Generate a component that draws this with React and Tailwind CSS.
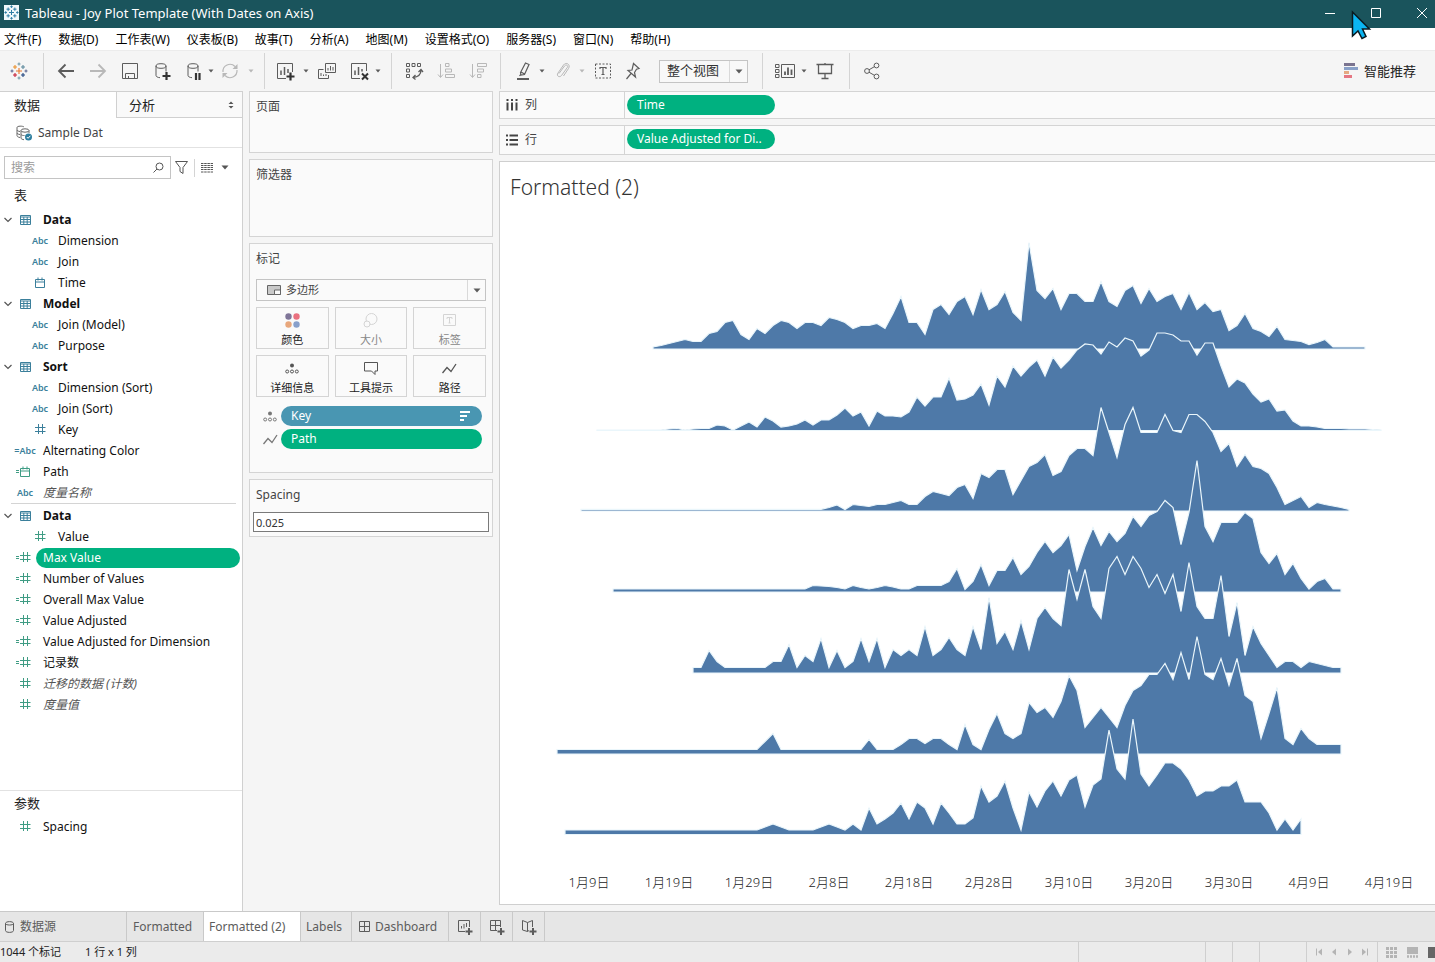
import React, { useState } from "react"

const FONT = "font-['Noto_Sans','Noto_Sans_CJK_SC',sans-serif]"

// Day heights per ridge, one value for every 8 units on the time axis
const ridges = [
    {
        start: 653, base: 349,
        values: [1.5, 3, 5, 7, 9, 7, 7, 15, 17, 26, 28, 14, 9, 20, 15, 23, 28, 26, 20, 26, 26, 23, 31, 29, 26, 20, 23, 23, 25, 20, 35, 52, 26, 26, 14, 39, 44, 34, 47, 52, 34, 59, 39, 44, 57, 36, 28, 106, 58, 50, 60, 39, 55, 55, 47, 47, 67, 47, 42, 58, 63, 45, 60, 47, 52, 55, 39, 56, 39, 46, 37, 39, 18, 23, 35, 20, 17, 12, 22, 9, 8, 7, 4, 6, 9, 1.5, 1.5, 1.5, 1.5, 1.5],
    },
    {
        start: 597, base: 430.5,
        values: [0, 0, 0, 0, 0, 0, 0, 0, 0, 1, 1.5, 0, 1, 1.5, 1.5, 5, 4, 0, 4, 8, 3, 13, 9, 3, 4, 6, 10, 5, 10, 10, 15, 22, 14, 18, 4, 19, 14, 14, 13, 18, 33, 24, 33, 33, 52, 30, 31, 35, 46, 25, 54, 43, 64, 54, 63, 70, 54, 73, 62, 70, 80, 86, 85, 76, 88, 83, 92, 89, 74, 80, 97, 97, 95, 89, 89, 75, 87, 87, 64, 43, 51, 47, 36, 28, 31, 19, 20, 9, 4, 4, 3, 1.5, 1.5, 1.5, 1, 1, 1, 0.5, 0],
    },
    {
        start: 581, base: 511,
        values: [...Array(31).fill(1.2), 3, 5.5, 1, 6, 5, 4, 6, 6, 8, 10, 6, 6, 14, 19, 17, 15, 23, 26, 12, 37, 33, 41, 41, 16, 30, 44, 48, 56, 35, 39, 55, 62, 62, 55, 103, 78, 53, 86, 103, 78, 78, 78, 96, 80, 78, 96, 96, 89, 78, 59, 67, 44, 56, 44, 42, 37, 23, 6, 10, 14, 3, 8, 6, 4.5, 3, 1],
    },
    {
        start: 613, base: 592,
        values: [...Array(25).fill(2.5), 6, 5.5, 5, 4, 2.5, 6, 4, 2.5, 4, 6, 4.5, 2.5, 2.5, 6, 6, 6, 6, 10, 23, 2, 10, 27, 6, 21, 21, 34, 17, 25, 39, 50, 39, 46, 57, 21, 45, 64, 46, 60, 50, 58, 75, 65, 76, 80, 91, 84, 47, 79, 131, 65, 50, 69, 69, 69, 79, 73, 39, 28, 38, 17, 28, 13, 2.5, 10, 13, 2.5, 2.5],
    },
    {
        start: 693, base: 673,
        values: [5, 5, 22, 11, 5, 5, 5, 5, 5, 5, 11, 11, 28, 5, 17, 11, 34, 5, 22, 5, 11, 34, 11, 34, 5, 23, 17, 23, 17, 46, 17, 23, 35, 23, 17, 46, 23, 75, 29, 41, 23, 52, 23, 54, 65, 54, 47, 103, 73, 103, 66, 54, 104, 116, 98, 116, 104, 85, 98, 79, 98, 61, 110, 66, 54, 54, 97, 36, 70, 17, 46, 29, 17, 5, 11, 11, 5, 11, 9, 7, 5, 5],
    },
    {
        start: 557, base: 754,
        values: [...Array(26).fill(4), 12, 20, ...Array(11).fill(4), 14, 4, 4, 4, 9, 15, 15, 10, 15, 15, 9, 4, 29, 9, 4, 24, 40, 20, 15, 20, 51, 41, 46, 36, 52, 78, 63, 26, 36, 46, 36, 26, 48, 63, 68, 79, 79, 90, 74, 101, 74, 117, 79, 74, 95, 68, 95, 58, 52, 15, 40, 66, 15, 9, 25, 15, 9, 9, 9, 9],
    },
    {
        start: 565, base: 834.5,
        values: [...Array(25).fill(4), 7, 10, 7, 4, 4, 4, 4, 7, 10, 7, 4, 10, 4, 26, 10, 15, 21, 31, 15, 32, 26, 10, 31, 21, 10, 10, 16, 48, 32, 38, 53, 26, 4, 42, 27, 43, 53, 38, 54, 59, 27, 49, 55, 104, 65, 55, 115, 60, 48, 59, 71, 71, 65, 54, 38, 43, 43, 48, 48, 54, 32, 32, 32, 21, 4, 15, 4, 15],
    },
]

const axisLabels = ["1月9日", "1月19日", "1月29日", "2月8日", "2月18日", "2月28日", "3月10日", "3月20日", "3月30日", "4月9日", "4月19日"]

const menus = ["文件(F)", "数据(D)", "工作表(W)", "仪表板(B)", "故事(T)", "分析(A)", "地图(M)", "设置格式(O)", "服务器(S)", "窗口(N)", "帮助(H)"]

const dimensions = [
    { label: "Data", group: true },
    { label: "Dimension", icon: "abc", nested: true },
    { label: "Join", icon: "abc", nested: true },
    { label: "Time", icon: "date", nested: true },
    { label: "Model", group: true },
    { label: "Join (Model)", icon: "abc", nested: true },
    { label: "Purpose", icon: "abc", nested: true },
    { label: "Sort", group: true },
    { label: "Dimension (Sort)", icon: "abc", nested: true },
    { label: "Join (Sort)", icon: "abc", nested: true },
    { label: "Key", icon: "num", nested: true },
    { label: "Alternating Color", icon: "abc", calc: true },
    { label: "Path", icon: "date", calc: true, green: true },
    { label: "度量名称", icon: "abc", italic: true },
]

const measures = [
    { label: "Data", group: true },
    { label: "Value", icon: "num", nested: true, green: true },
    { label: "Max Value", icon: "num", calc: true, green: true },
    { label: "Number of Values", icon: "num", calc: true, green: true },
    { label: "Overall Max Value", icon: "num", calc: true, green: true },
    { label: "Value Adjusted", icon: "num", calc: true, green: true },
    { label: "Value Adjusted for Dimension", icon: "num", calc: true, green: true },
    { label: "记录数", icon: "num", calc: true, green: true },
    { label: "迁移的数据 (计数)", icon: "num", italic: true, green: true },
    { label: "度量值", icon: "num", italic: true, green: true },
]

const Svg = ({ w = 18, h = 18, className = "", children }) => (
    <svg width={w} height={h} viewBox={`0 0 ${w} ${h}`} fill="none" stroke="currentColor" className={`shrink-0 ${className}`} aria-hidden="true">
        {children}
    </svg>
)

const Caret = ({ className = "" }) => (
    <Svg w={8} h={5} className={className}><path d="M0.5 0.5h7L4 4.5z" fill="currentColor" stroke="none" /></Svg>
)

// Crosses of the logo: x, y, arm length, colour
const logoMarks = [
    [9, 9, 3, "#e8762c"], [5, 5, 2, "#eb912c"], [13, 5, 2, "#59879b"], [5, 13, 2, "#c72037"], [13, 13, 2, "#1f447e"],
    [9, 2, 1.5, "#7199a6"], [9, 16, 1.5, "#7199a6"], [2, 9, 1.5, "#5b6591"], [16, 9, 1.5, "#5b6591"],
]

const Logo = ({ mono, w = 18 }) => (
    <svg width={w} height={w} viewBox="0 0 18 18" aria-hidden="true" className="shrink-0">
        {mono && <rect width="18" height="18" fill="#f0f8fa" />}
        {logoMarks.map(([x, y, r, color]) => (
            <path key={`${x}-${y}`} d={`M${x - r} ${y}h${r * 2}M${x} ${y - r}v${r * 2}`} stroke={mono ? "#2f7fa5" : color} strokeWidth={mono ? 1.2 : 1.1} />
        ))}
    </svg>
)

const DbShape = () => (
    <>
        <ellipse cx="8" cy="4" rx="5" ry="2.3" />
        <path d="M3 4v9.500c0 1 1.500 2 4 2.200M13 4v5.500" />
    </>
)

const icons = {
    back: <path d="M17 9H2M8.500 2.500L2 9l6.500 6.500" strokeWidth="1.8" />,
    forward: <path d="M1 9h15M9.500 2.500L16 9l-6.500 6.500" strokeWidth="1.8" />,
    save: <path d="M1.500 1.500h15v15h-15zM4.500 16.500v-5h9v5M7.500 16.500v-2.500" />,
    dbAdd: <><DbShape /><path d="M13.500 10v8M9.500 14h8" strokeWidth="2.200" stroke="#333" /></>,
    dbPause: <><DbShape /><path d="M11 11v7M14.500 11v7" strokeWidth="2.200" stroke="#333" /></>,
    refresh: <><path d="M2 10a7 7 0 0 1 12-5.500M16 8a7 7 0 0 1-12 5.500" strokeWidth="1.200" /><path d="M16.500 2v5h-5zM1.500 16v-5h5z" fill="currentColor" stroke="none" /></>,
    sheetAdd: <><path d="M10 16.500H1.500v-15h15V10" /><path d="M5 13V8.500M8.500 13V5M12 11V7" strokeWidth="1.500" /><path d="M14.500 10.500v8M10.500 14.500h8" strokeWidth="2.200" stroke="#333" /></>,
    duplicate: <><path d="M7.500 1.500h10v9h-10zM10 8.500V6M12.500 8.500V4M15 8.500V5" /><path d="M5.500 7.500h-5v9h10v-3.500M3 14v-3M5.500 14v-1.500M8 14v-2" /></>,
    sheetClear: <><path d="M10 16.500H1.500v-15h15V9" /><path d="M5 13V8.500M8.500 13V5M12 9.500V7" strokeWidth="1.500" /><path d="M12 11.500l6 6M18 11.500l-6 6" strokeWidth="2" stroke="#333" /></>,
    swap: <><path d="M1.500 1.500h3v3h-3zM7 1.500h3v3H7zM12.500 1.500h3v3h-3zM1.500 7h3v3h-3zM1.500 12.500h3v3h-3z" /><path d="M16 8c0 4-3 7-8 7.500M13.500 10L16 7.500 18 10M10.500 13L8 15.500l2.500 2" strokeWidth="1.300" /></>,
    sortAsc: <><path d="M3.500 2v13M1 12.500l2.500 3 2.500-3M8.500 1.500h3.500v3H8.500zM8.500 7h6v3h-6zM8.500 12.500h9v3h-9z" /></>,
    sortDesc: <><path d="M3.500 2v13M1 12.500l2.500 3 2.500-3M8.500 1.500h9v3h-9zM8.500 7h6v3h-6zM8.500 12.500h3.500v3H8.500z" /></>,
    highlight: <><path d="M11.500 1l3.500 1.500-4.500 10-3.500.5-.5-2.500zM7 10l3.500 2M5.500 14l1.500-2" strokeWidth="1.200" /><path d="M3 17h12" strokeWidth="2" /></>,
    clip: <path d="M5 11.500l5.500-7.500c1.500-2 4-.5 2.800 1.500L7.500 13.500c-2 2.500-5.500.5-3.500-2.500L9.500 3c2.500-3.500 7.500-.5 5 3.500L9.500 14" />,
    text: <><path d="M1.500 2h15v14h-15z" strokeDasharray="2 1.500" /><path d="M6 7V5.500h6V7M9 5.500v7M7.500 12.500h3" strokeWidth="1.200" /></>,
    pin: <path d="M9.500 1.500l5.500 5-2.500.7-2 3.300 1 4.500L4 8.500l4-.500zM7 11.500l-4.500 5.500" strokeWidth="1.200" />,
    cards: <><path d="M-0.500 2.500h3.500v3h-3.500zM-0.500 7.500h3.500v3h-3.500zM-0.500 12.500h3.500v3h-3.500zM5.500 2.500h13v13h-13z" /><path d="M9 13V9.500M12 13V5.500M15.500 13V7.500" strokeWidth="1.800" /></>,
    present: <path d="M0.500 2.500h17M2.500 3v8.500h13V3M9 1v1.500M9 11.500v5M5.500 16.500h7" strokeWidth="1.300" />,
    share: <><circle cx="4" cy="9" r="2.400" /><circle cx="13.500" cy="3.500" r="2.400" /><circle cx="13.500" cy="14.500" r="2.400" /><path d="M6 7.800l5.500-3.200M6 10.200l5.500 3.200" /></>,
}

const Tool = ({ name, label, dim, className = "" }) => (
    <button type="button" aria-label={label} className={`flex h-6 w-6 shrink-0 items-center justify-center ${dim ? "text-[#b8b8b8]" : "text-[#5c5c5c]"} ${className}`}>
        <Svg className="overflow-visible">{icons[name]}</Svg>
    </button>
)

const ToolCaret = ({ label, dim, className = "" }) => (
    <button type="button" aria-label={label} className={`flex h-6 w-[10px] shrink-0 items-center justify-center ${dim ? "text-[#b8b8b8]" : "text-[#5c5c5c]"} ${className}`}>
        <Svg w={6} h={4}><path d="M0.500 0.500h5L3 3.500z" fill="currentColor" stroke="none" /></Svg>
    </button>
)

const Divider = ({ className = "" }) => <span className={`h-9 w-px shrink-0 bg-[#d4d4d4] ${className}`}></span>

const TitleBar = () => (
    <header className="relative flex h-7 shrink-0 items-center bg-[#1a545c] pb-[3px] pl-1 text-white">
        <Logo mono w={15} />
        <h1 className="ml-[6px] flex-1 truncate text-[13px] leading-4">Tableau - Joy Plot Template (With Dates on Axis)</h1>
        <div className="flex gap-5">
            <button type="button" aria-label="最小化" className="flex h-5 w-[26px] items-center justify-center">
                <Svg w={10} h={10}><path d="M0 5.500h10" /></Svg>
            </button>
            <button type="button" aria-label="最大化" className="flex h-5 w-[26px] items-center justify-center">
                <Svg w={10} h={10}><path d="M0.500 0.500h9v9h-9z" /></Svg>
            </button>
            <button type="button" aria-label="关闭" className="flex h-5 w-[26px] items-center justify-center">
                <Svg w={10} h={10}><path d="M0 0l10 10M10 0L0 10" /></Svg>
            </button>
        </div>
        {/* Pointer */}
        <svg width="21" height="30" viewBox="0 0 21 30" className="absolute top-[10px] right-[63px] z-10" aria-hidden="true">
            <path d="M1.500 2v24l5.500-5 4 7.500 4-2-3.500-7.500h7z" fill="#0bb5f2" stroke="#0a1a20" strokeWidth="1.500" />
        </svg>
    </header>
)

const Toolbar = () => (
    <div className="flex h-[41px] shrink-0 items-center border-t border-[#ececec] bg-[#f5f5f5]">
        <button type="button" aria-label="开始" className="ml-[7px] flex h-6 w-6 items-center justify-center"><Logo /></button>
        <Divider className="ml-3" />
        <Tool name="back" label="撤消" className="ml-[10px]" />
        <Tool name="forward" label="重做" dim className="ml-2" />
        <Tool name="save" label="保存" className="ml-2" />
        <Tool name="dbAdd" label="新建数据源" className="ml-2" />
        <Tool name="dbPause" label="暂停自动更新" className="ml-2" />
        <ToolCaret label="更新选项" />
        <Tool name="refresh" label="运行更新" dim className="ml-[2px]" />
        <ToolCaret label="运行选项" dim className="ml-1" />
        <Divider className="ml-2" />
        <Tool name="sheetAdd" label="新建工作表" className="ml-2" />
        <ToolCaret label="新建选项" className="ml-1" />
        <Tool name="duplicate" label="复制工作表" className="ml-1" />
        <Tool name="sheetClear" label="清除工作表" className="ml-2" />
        <ToolCaret label="清除选项" className="ml-[2px]" />
        <Divider className="ml-2" />
        <Tool name="swap" label="交换行和列" className="ml-[10px]" />
        <Tool name="sortAsc" label="升序排序" dim className="ml-2" />
        <Tool name="sortDesc" label="降序排序" dim className="ml-2" />
        <Divider className="ml-[10px]" />
        <Tool name="highlight" label="突出显示" className="ml-[10px]" />
        <ToolCaret label="突出显示选项" className="ml-[2px]" />
        <Tool name="clip" label="组成员" dim className="ml-1" />
        <ToolCaret label="组选项" dim className="ml-[2px]" />
        <Tool name="text" label="显示标记标签" className="ml-1" />
        <Tool name="pin" label="固定轴" className="ml-[6px]" />
        <div className="relative ml-[14px] h-[23px] w-[89px] shrink-0">
            <select aria-label="适合" className="block h-full w-full appearance-none border border-[#c4c4c4] bg-[#f8f8f8] pb-[2px] pl-[7px] text-[13px] leading-4 text-[#333]">
                <option>整个视图</option>
            </select>
            <span className="pointer-events-none absolute inset-y-px right-px flex w-[18px] items-center justify-center border-l border-[#d9d9d9] text-[#5c5c5c]"><Caret /></span>
        </div>
        <Divider className="ml-[14px]" />
        <Tool name="cards" label="显示/隐藏卡" className="ml-[10px]" />
        <ToolCaret label="卡选项" className="ml-[2px]" />
        <Tool name="present" label="演示模式" className="ml-1" />
        <Divider className="ml-3" />
        <Tool name="share" label="共享工作簿" className="ml-[10px]" />
        <button type="button" className="mr-[19px] ml-auto flex items-center gap-[6px] text-[13px] leading-4 text-[#222]">
            <svg width="14" height="16" viewBox="0 0 14 16" aria-hidden="true">
                <path d="M0 0h11v3H0z" fill="#7b7490" />
                <path d="M0 4h14v3H0z" fill="#89a0c8" />
                <path d="M0 8h5v3H0z" fill="#e5a982" />
                <path d="M0 12h8v3H0z" fill="#e57783" />
            </svg>
            智能推荐
        </button>
    </div>
)

const FieldIcon = ({ field }) => {
    if (field.group) {
        return <Svg w={11} h={10} className="text-[#3b7f9b]"><path d="M0.500 0.500h10v9h-10zM0.500 2h10M0.500 4.500h10M0.500 7h10M3.800 2v8M7.200 2v8" /></Svg>
    }
    const tone = field.green ? "text-[#3f9c84]" : "text-[#3b7f9b]"
    if (field.icon === "abc") {
        return <span className={`text-[9px] leading-3 font-semibold ${tone}`}>{field.calc ? "=Abc" : "Abc"}</span>
    }
    return (
        <Svg w={19} h={11} className={tone}>
            {field.calc && <path d="M0 4.500h3M0 6.500h3" />}
            {field.icon === "date"
                ? <path d="M4.500 2.500h9v8h-9zM4.500 5h9M7 0.500v3M11 0.500v3" />
                : <path d="M7.500 0v10M11.500 0v10M4 3.500h10.500M4 7.500h10.500" />}
        </Svg>
    )
}

const FieldRow = ({ field, selected, onSelect }) => (
    <li className="flex h-[21px] items-center pr-[2px]">
        {field.nested ? <span className="w-[30px] shrink-0"></span> : (
            <span className="flex w-[15px] shrink-0 justify-center text-[#555]">
                {field.group && <Svg w={8} h={6}><path d="M0.500 1L4 4.500 7.500 1" strokeWidth="1.200" /></Svg>}
            </span>
        )}
        <span className="flex w-[21px] shrink-0 justify-center pr-px"><FieldIcon field={field} /></span>
        <button
            type="button"
            onClick={() => onSelect(field.label)}
            className={`h-5 min-w-0 flex-1 truncate rounded-full px-[7px] text-left text-[12px] leading-5 ${selected ? "bg-[#00b180] text-white" : field.italic ? "text-[#555] italic" : "text-[#111]"} ${field.group ? "font-bold" : ""}`}
        >
            {field.label}
        </button>
    </li>
)

const DataPane = () => {
    const [selected, setSelected] = useState("Max Value")

    return (
        <aside className="flex w-[243px] shrink-0 flex-col border-t border-r border-[#d0d0d0] bg-white">
            <div className="flex h-[26px] shrink-0 text-[13px] leading-4 text-[#222]">
                <button type="button" className="w-[116px] pl-[14px] text-left">数据</button>
                <button type="button" className="flex flex-1 items-center justify-between border-b border-l border-[#d0d0d0] bg-[#f9f9f9] pr-2 pl-3">
                    分析
                    <Svg w={6} h={8}><path d="M0.500 3h5L3 0.500zM0.500 5h5L3 7.500z" fill="#555" stroke="none" /></Svg>
                </button>
            </div>
            <button type="button" className="flex h-[30px] shrink-0 items-center gap-[6px] border-b border-[#e2e2e2] pl-4 text-[12px] leading-4 text-[#444]">
                <Svg w={16} h={16} className="text-[#666]">
                    <path d="M4 12.500c-2-.3-3-1-3-2V2.500C1 .8 7 .8 8 2M1 5c.5 1 1.500 1.300 3 1.500M1 8c.5 1 1.500 1.300 3 1.500" />
                    <ellipse cx="9" cy="5.500" rx="4" ry="1.700" />
                    <path d="M5 5.500v7.500c0 1 1.500 1.500 3 1.700M13 5.500V8M5 9.500c1 1 2 1 3.500 1" />
                    <circle cx="12.500" cy="12" r="3.500" fill="#2f7f9f" stroke="none" />
                    <path d="M10.800 12l1.300 1.300 2.200-2.500" stroke="#fff" />
                </Svg>
                Sample Dat
            </button>
            <div className="mt-2 flex h-[23px] shrink-0 items-center pl-1 text-[#555]">
                <label className="flex h-full w-[167px] items-center border border-[#c4c4c4] px-[6px]">
                    <input type="search" aria-label="搜索" placeholder="搜索" className="min-w-0 flex-1 text-[12px] leading-4 outline-none placeholder:text-[#9a9a9a]" />
                    <Svg w={11} h={11}><circle cx="6.500" cy="4.500" r="3.500" /><path d="M4 7L0.500 10.500" /></Svg>
                </label>
                <button type="button" aria-label="筛选" className="ml-1"><Svg w={13} h={13}><path d="M0.500 0.500h12L8 6.500v6l-3-2v-4z" /></Svg></button>
                <span className="ml-[6px] h-[18px] w-px bg-[#d4d4d4]"></span>
                <button type="button" aria-label="视图" className="ml-[6px] flex items-center gap-2">
                    <Svg w={12} h={10}><path d="M0 0.500h12M0 2.500h12M0 4.500h12M0 6.500h12M0 9h12" strokeDasharray="2.500 0.700" /></Svg>
                    <Caret />
                </button>
            </div>
            <h2 className="mt-[6px] h-6 shrink-0 pl-[14px] text-[13px] leading-5 text-[#222]">表</h2>
            <ul className="shrink-0">
                {dimensions.map((field) => <FieldRow key={field.label} field={field} onSelect={setSelected} />)}
            </ul>
            <hr className="mr-[6px] mb-px ml-[11px] border-[#d4d4d4]" />
            <ul className="min-h-0 flex-1 overflow-hidden">
                {measures.map((field) => (
                    <FieldRow key={field.label} field={field} selected={selected === field.label} onSelect={setSelected} />
                ))}
            </ul>
            <section className="h-[121px] shrink-0 border-t border-[#e2e2e2]">
                <h2 className="h-[25px] pl-[14px] text-[13px] leading-6 text-[#222]">参数</h2>
                <ul><FieldRow field={{ label: "Spacing", icon: "num", green: true }} onSelect={setSelected} /></ul>
            </section>
        </aside>
    )
}

const DetailIcon = () => (
    <Svg w={14} h={11}>
        <circle cx="7" cy="2.500" r="2" fill="currentColor" stroke="none" />
        <circle cx="2.200" cy="8.500" r="1.500" /><circle cx="7" cy="8.500" r="1.500" /><circle cx="11.800" cy="8.500" r="1.500" />
    </Svg>
)

const PathIcon = () => <Svg w={15} h={11}><path d="M0.500 10l4.500-5.500 4 4 5-7.500" strokeWidth="1.300" /></Svg>

const markButtons = [
    {
        label: "颜色",
        icon: (
            <Svg w={15} h={15}>
                <circle cx="3.500" cy="3.500" r="3.200" fill="#7f7598" stroke="none" /><circle cx="11.500" cy="3.500" r="3.200" fill="#ea7180" stroke="none" />
                <circle cx="3.500" cy="11.500" r="3.200" fill="#e8a77c" stroke="none" /><circle cx="11.500" cy="11.500" r="3.200" fill="#88a0cb" stroke="none" />
            </Svg>
        ),
    },
    { label: "大小", dim: true, icon: <Svg w={15} h={15}><circle cx="8.500" cy="6" r="5.500" /><circle cx="4" cy="11" r="3" fill="#fafafa" /></Svg> },
    { label: "标签", dim: true, icon: <Svg w={14} h={14}><path d="M0.500 1.500h12v11h-12zM4 6V4.500h5V6M6.500 4.500v5.500M5.500 10h2" /></Svg> },
    { label: "详细信息", icon: <DetailIcon /> },
    { label: "工具提示", icon: <Svg w={14} h={13}><path d="M0.500 0.500h13v8.500H11v3.500L7.500 9h-7z" /></Svg> },
    { label: "路径", icon: <PathIcon /> },
]

const CARD = "border border-[#d4d4d4] bg-[#fafafa]"

const ShelfColumn = () => (
    <div className="flex w-[244px] shrink-0 flex-col gap-[6px] text-[12px] leading-4 text-[#444]">
        <section className={`h-[62px] px-[6px] pt-[7px] ${CARD}`}><h2>页面</h2></section>
        <section className={`h-[78px] px-[6px] pt-[7px] ${CARD}`}><h2>筛选器</h2></section>
        <section className={`h-[230px] px-[6px] pt-[7px] ${CARD}`}>
            <h2>标记</h2>
            <div className="relative mt-3 h-[22px]">
                <select aria-label="标记类型" className="block h-full w-full appearance-none border border-[#c4c4c4] bg-[#fafafa] pl-[29px] text-[11px] leading-4 text-[#444]">
                    <option>多边形</option>
                </select>
                <span className="pointer-events-none absolute inset-y-0 left-[11px] flex items-center text-[#666]">
                    <Svg w={14} h={10}><path d="M0.500 0.500h13v9h-13z" fill="#c9c9c9" /><path d="M7.500 5h6v4.500h-6z" fill="#fafafa" /></Svg>
                </span>
                <span className="pointer-events-none absolute inset-y-px right-px flex w-[18px] items-center justify-center border-l border-[#d9d9d9] text-[#5c5c5c]"><Caret /></span>
            </div>
            <div className="mt-[6px] grid grid-cols-3 gap-x-[6px] gap-y-[6px]">
                {markButtons.map((button) => (
                    <button
                        key={button.label}
                        type="button"
                        disabled={button.dim}
                        className={`flex h-[42px] flex-col items-center justify-between border border-[#d4d4d4] pt-1 text-[11px] leading-4 ${button.dim ? "text-[#888]" : "text-[#222]"}`}
                    >
                        <span className={`flex h-4 items-center ${button.dim ? "text-[#d4d4d4]" : "text-[#555]"}`}>{button.icon}</span>
                        {button.label}
                    </button>
                ))}
            </div>
            <ul className="mt-[9px] flex flex-col gap-[3px] pr-1 pl-[7px] text-white">
                <li className="flex h-5 items-center gap-1">
                    <span className="flex w-[14px] shrink-0 justify-center text-[#777]"><DetailIcon /></span>
                    <button type="button" className="flex h-5 flex-1 items-center justify-between rounded-full bg-[#4996b2] pr-3 pl-[10px]">
                        Key
                        <Svg w={10} h={10}><path d="M0 1h10M0 5h7M0 9h4" strokeWidth="1.800" /></Svg>
                    </button>
                </li>
                <li className="flex h-5 items-center gap-1">
                    <span className="flex w-[14px] shrink-0 justify-center text-[#777]"><PathIcon /></span>
                    <button type="button" className="h-5 flex-1 rounded-full bg-[#00b180] pl-[10px] text-left">Path</button>
                </li>
            </ul>
        </section>
        <section className={`h-[58px] px-[3px] pt-[7px] ${CARD}`}>
            <label htmlFor="spacing" className="block pl-[3px]">Spacing</label>
            <input id="spacing" type="text" defaultValue="0.025" className="mt-[9px] block h-5 w-full border border-[#7a7a7a] bg-white px-[2px] text-[11px] leading-4 text-[#333]" />
        </section>
    </div>
)

const Shelf = ({ label, pill, icon, className }) => (
    <section className={`flex shrink-0 border-y border-l border-[#d4d4d4] bg-[#fafafa] ${className}`}>
        <h2 className="flex w-[125px] items-center gap-[7px] border-r border-[#d4d4d4] pl-[6px] text-[12px] leading-4 text-[#444]">
            <Svg w={12} h={12}>{icon}</Svg>
            {label}
        </h2>
        <button type="button" className="mt-[3px] ml-[2px] h-5 w-[148px] rounded-full bg-[#00b180] px-[10px] text-left text-[12px] leading-4 whitespace-nowrap text-white">{pill}</button>
    </section>
)

const ridgePoints = ({ start, base, values }) => {
    const top = values.map((value, index) => `${start + index * 8},${base - value - 0.5}`)
    return [`${start},${base}`, ...top, `${start + (values.length - 1) * 8},${base}`].join(" ")
}

const Worksheet = () => (
    <main className="flex min-w-0 flex-1 flex-col gap-[6px]">
        <Shelf label="列" pill="Time" className="h-7" icon={<path d="M1.500 3.500v8M6 3.500v8M10.500 3.500v8M1.500 0v2M6 0v2M10.500 0v2" strokeWidth="2" />} />
        <Shelf label="行" pill="Value Adjusted for Di.." className="h-[30px]" icon={<path d="M3.500 1.500H12M3.500 6H12M3.500 10.500H12M0 1.500h2M0 6h2M0 10.500h2" strokeWidth="2" />} />
        <section className="flex min-h-0 flex-1 flex-col border-y border-l border-[#cfcfcf] bg-white">
            <h2 className="h-[50px] shrink-0 pt-[11px] pl-[10px] text-[21px] leading-7 font-light text-[#333]">Formatted (2)</h2>
            <svg viewBox="500 212 935 656" preserveAspectRatio="none" className="min-h-0 w-full flex-1" role="img" aria-label="Formatted (2)">
                {ridges.map((ridge) => (
                    <polygon key={ridge.base} points={ridgePoints(ridge)} fill="#4e79a8" stroke="#eaf6fb" strokeWidth="1.2" vectorEffect="non-scaling-stroke" />
                ))}
            </svg>
            <div className="mb-2 flex h-7 shrink-0 items-center pr-[6px] pl-[49px] text-[13px] leading-4 text-[#222]">
                {axisLabels.map((label) => <span key={label} className="flex-1 text-center font-light">{label}</span>)}
            </div>
        </section>
    </main>
)

const GridIcon = () => <Svg w={11} h={11}><path d="M0.500 0.500h10v10h-10zM0.500 5.500h10M5.500 0.500v10" /></Svg>

const TAB = "flex items-center border-r border-[#c9c9c9]"

const SheetTabs = () => (
    <nav className="flex h-[30px] shrink-0 border-t border-[#c9c9c9] bg-[#e6e6e6] text-[12px] leading-4 text-[#5c5c5c]">
        <button type="button" className={`w-[127px] gap-[6px] pl-[5px] ${TAB}`}>
            <Svg w={9} h={12}><path d="M0.500 2.500c0-2.500 8-2.500 8 0v7c0 2.500-8 2.500-8 0zM0.500 2.500c0 2 8 2 8 0" /></Svg>
            数据源
        </button>
        <button type="button" className={`w-[77px] pl-[6px] ${TAB}`}>Formatted</button>
        <button type="button" className={`w-[97px] bg-white pl-[5px] ${TAB}`}>Formatted (2)</button>
        <button type="button" className={`w-[51px] pl-[5px] ${TAB}`}>Labels</button>
        <button type="button" className={`w-[97px] gap-[5px] pl-[7px] ${TAB}`}><GridIcon />Dashboard</button>
        <button type="button" aria-label="新建工作表" className={`w-8 justify-center ${TAB}`}>
            <Svg w={16} h={16}><path d="M8 12.500H1.500v-11h11V8M4.500 9.500V7M7 9.500V5M9.500 8V4" /><path d="M12 9v7M8.500 12.500h7" strokeWidth="2" /></Svg>
        </button>
        <button type="button" aria-label="新建仪表板" className={`w-8 justify-center ${TAB}`}>
            <Svg w={16} h={16}><path d="M8 11.500H1.500v-10h10V8M1.500 6.500h10M6.500 1.500v10" /><path d="M12 9v7M8.500 12.500h7" strokeWidth="2" /></Svg>
        </button>
        <button type="button" aria-label="新建故事" className={`w-8 justify-center ${TAB}`}>
            <Svg w={16} h={16}><path d="M8 11.500l-1.500 1L1.500 11V1.500l5 2 5-2V8M6.500 3.500v9" /><path d="M12 9v7M8.500 12.500h7" strokeWidth="2" /></Svg>
        </button>
    </nav>
)

const StatusBar = () => (
    <footer className="flex h-[21px] shrink-0 items-stretch overflow-hidden border-t border-[#cfcfcf] bg-[#ebebeb] text-[11px] leading-5 text-[#222]">
        <span>1044 个标记</span>
        <span className="ml-6">1 行 x 1 列</span>
        <div className="ml-auto flex text-[#b4b4b4]">
            <span className="w-[127px] border-l border-[#cfcfcf]"></span>
            <span className="w-[27px] border-l border-[#cfcfcf]"></span>
            <span className="w-[27px] border-l border-[#cfcfcf]"></span>
            <span className="w-[47px] border-l border-[#cfcfcf]"></span>
            <div className="flex w-[71px] items-center justify-around border-l border-[#cfcfcf] px-1">
                <button type="button" aria-label="第一个"><Svg w={8} h={8}><path d="M7 0.500v7L3 4z" fill="currentColor" stroke="none" /><path d="M1.500 0.500v7" /></Svg></button>
                <button type="button" aria-label="上一个"><Svg w={8} h={8}><path d="M6 0.500v7L2 4z" fill="currentColor" stroke="none" /></Svg></button>
                <button type="button" aria-label="下一个"><Svg w={8} h={8}><path d="M2 0.500v7L6 4z" fill="currentColor" stroke="none" /></Svg></button>
                <button type="button" aria-label="最后一个"><Svg w={8} h={8}><path d="M1 0.500v7L5 4z" fill="currentColor" stroke="none" /><path d="M6.500 0.500v7" /></Svg></button>
            </div>
            <div className="flex w-[58px] items-center gap-[10px] overflow-hidden border-l border-[#cfcfcf] pl-2">
                <button type="button" aria-label="工作表排序"><Svg w={11} h={11}><path d="M0 1.500h11M0 5.500h11M0 9.500h11" strokeWidth="3" strokeDasharray="3 1" /></Svg></button>
                <button type="button" aria-label="幻灯片"><Svg w={11} h={11}><path d="M0 0h11v7H0z" fill="currentColor" stroke="none" /><path d="M0 9.500h11" strokeWidth="2.500" strokeDasharray="2 1" /></Svg></button>
                <button type="button" aria-label="标签" className="text-[#666]"><Svg w={11} h={11}><path d="M0 0h11v11H0z" fill="currentColor" stroke="none" /></Svg></button>
            </div>
        </div>
    </footer>
)

const App = () => {
    return (
        <div className={`flex h-screen flex-col overflow-hidden bg-[#f5f5f5] ${FONT}`}>
            <TitleBar />
            <nav className="flex h-[22px] shrink-0 items-center gap-[17px] bg-white pt-[2px] pl-1 text-[12px] leading-4 text-black">
                {menus.map((menu) => <button key={menu} type="button" className="whitespace-nowrap">{menu}</button>)}
            </nav>
            <Toolbar />
            <div className="flex min-h-0 flex-1 gap-[6px]">
                <DataPane />
                <ShelfColumn />
                <div className="flex min-w-0 flex-1 pb-[6px]"><Worksheet /></div>
            </div>
            <SheetTabs />
            <StatusBar />
        </div>
    )
}

export default App
